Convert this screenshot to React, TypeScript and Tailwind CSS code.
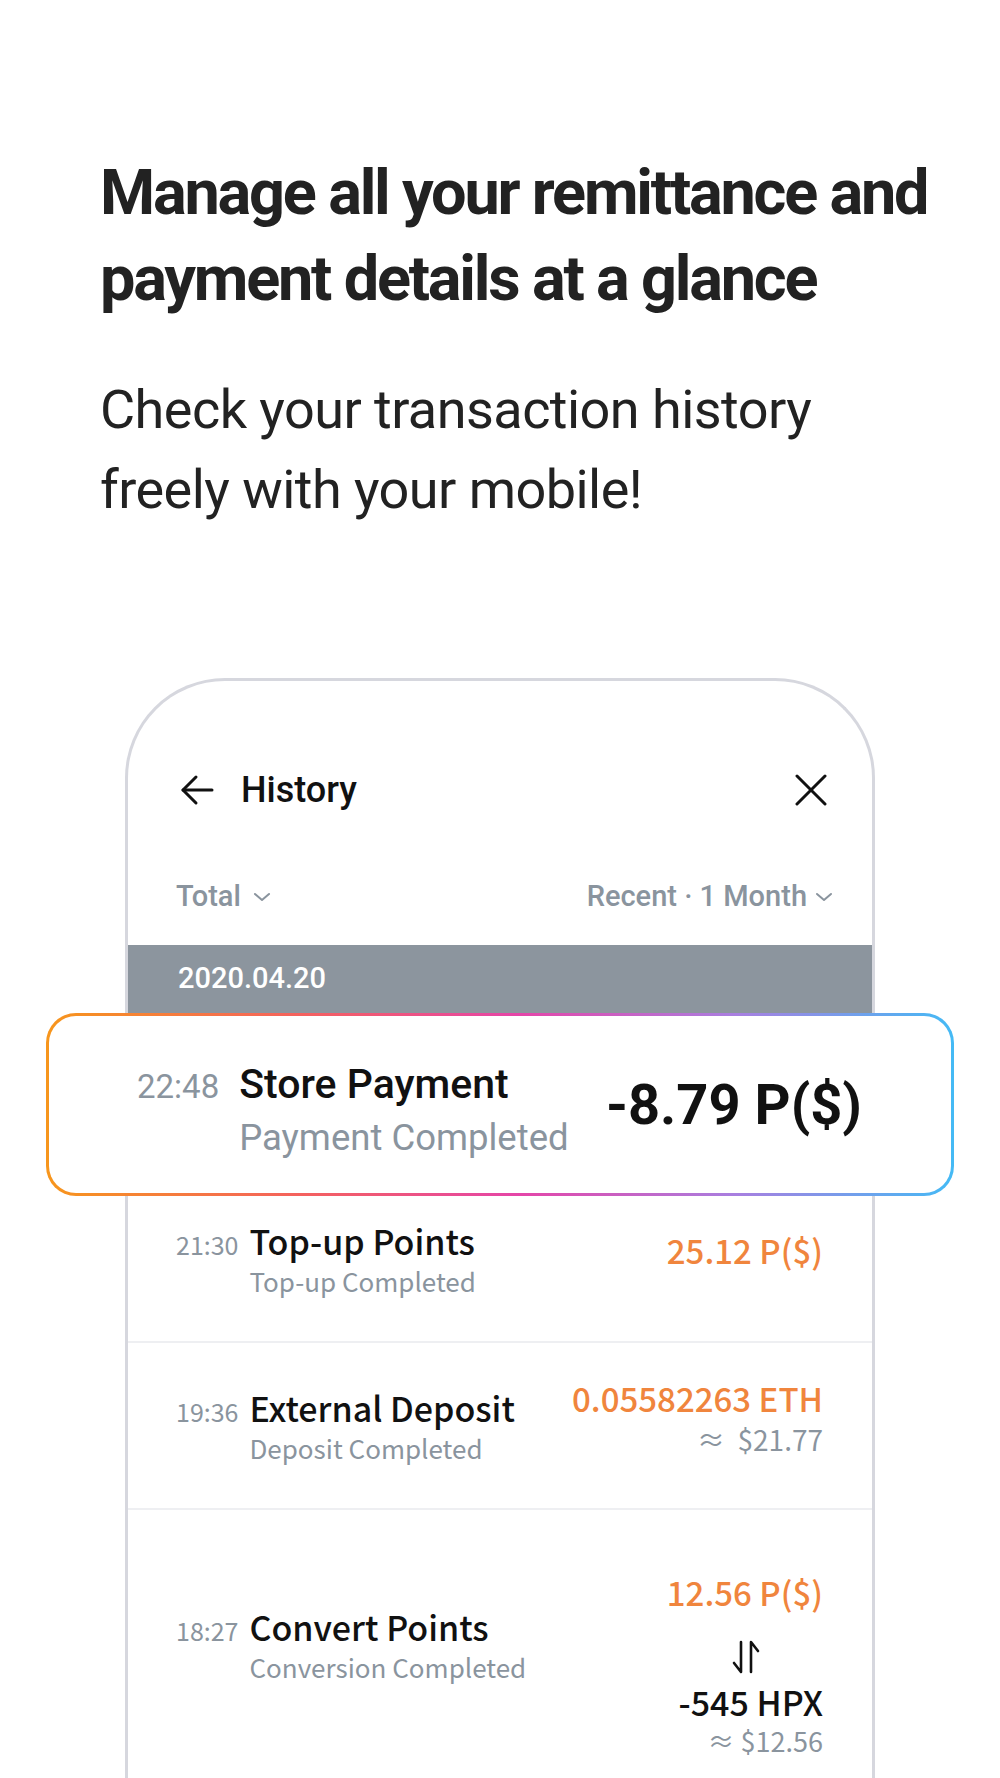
import React from 'react';

const roboto = { fontFamily: 'Roboto, "Noto Sans", sans-serif' };
const noto = { fontFamily: '"Noto Sans CJK KR", "Noto Sans", sans-serif' };

function BackArrow() {
  return (
    <svg width="34" height="32" viewBox="0 0 34 32" fill="none" stroke="#111" strokeWidth="3" strokeLinecap="round" strokeLinejoin="round">
      <path d="M32 16H3" />
      <path d="M16 3L3 16l13 13" />
    </svg>
  );
}

function CloseIcon() {
  return (
    <svg width="32" height="32" viewBox="0 0 32 32" fill="none" stroke="#111" strokeWidth="3" strokeLinecap="round">
      <path d="M2 2l28 28" />
      <path d="M30 2L2 30" />
    </svg>
  );
}

function Chevron() {
  return (
    <svg width="18" height="10" viewBox="0 0 18 10" fill="none" stroke="#8a949e" strokeWidth="2" strokeLinecap="round" strokeLinejoin="round">
      <path d="M2 2l7 6 7-6" />
    </svg>
  );
}

function SwapArrows() {
  return (
    <svg width="28" height="34" viewBox="0 0 28 34" fill="none" stroke="#111" strokeWidth="2.6" strokeLinecap="round" strokeLinejoin="round">
      <path d="M9 2v30L2 23" />
      <path d="M19 32V2l7 9" />
    </svg>
  );
}

interface Tx {
  time: string;
  title: string;
  status: string;
}

function TxLeft({ time, title, status }: Tx) {
  return (
    <div className="flex items-baseline gap-[11px]" style={noto}>
      <span className="text-[25px] text-[#8a949e]">{time}</span>
      <div className="flex flex-col">
        <span className="text-[34px] leading-[44px] font-medium text-[#111]">{title}</span>
        <span className="text-[26px] leading-[36px] text-[#8a949e]">{status}</span>
      </div>
    </div>
  );
}

export default function App() {
  return (
    <div className="w-full h-[1778px] overflow-hidden bg-white">
      <div className="pl-[100px] pt-[150px]" style={roboto}>
        <h1 className="text-[63px] font-bold leading-[86px] tracking-[-0.035em] text-[#222]">
          Manage all your remittance and
          <br />
          payment details at a glance
        </h1>
        <p className="mt-[48px] text-[54px] leading-[80px] tracking-[-0.01em] text-[#222]">
          Check your transaction history
          <br />
          freely with your mobile!
        </p>
      </div>

      <div className="ml-[125px] mt-[148px] w-[750px] h-[1200px] rounded-t-[100px] border-[3px] border-b-0 border-[#d6d7de]">
        {/* header */}
        <div className="flex items-center justify-between pl-[52px] pr-[45px] pt-[79px] h-[139px]" style={roboto}>
          <div className="flex items-center gap-[27px]">
            <BackArrow />
            <span className="text-[36px] font-medium text-[#111]">History</span>
          </div>
          <CloseIcon />
        </div>

        {/* filters */}
        <div className="mt-[57px] flex items-center justify-between pl-[48px] pr-[39px] h-[40px] text-[29px] font-medium text-[#8a949e]" style={roboto}>
          <div className="flex items-center gap-[12px]">
            <span>Total</span>
            <Chevron />
          </div>
          <div className="flex items-center gap-[8px]">
            <span>Recent · 1 Month</span>
            <Chevron />
          </div>
        </div>

        {/* date bar */}
        <div className="mt-[28px] h-[68px] bg-[#8c959e] flex items-center pl-[50px] text-[29px] font-medium text-white" style={roboto}>
          2020.04.20
        </div>

        {/* highlighted row */}
        <div className="relative h-[163px]">
          <div className="absolute top-0 left-[-82px] z-10 w-[908px] h-[183px] rounded-[30px] p-[3px] bg-[linear-gradient(90deg,#f7961c_0%,#f4615e_28%,#e545a8_52%,#a87fe0_76%,#44baf5_100%)]">
            <div className="w-full h-full rounded-[27px] bg-white flex items-center justify-between pl-[88px] pr-[89px]" style={roboto}>
              <div className="flex items-baseline gap-[20px] pt-[12px]">
                <span className="text-[33px] text-[#8a949e]">22:48</span>
                <div className="flex flex-col">
                  <span className="text-[41px] leading-[54px] font-medium text-[#111]">Store Payment</span>
                  <span className="text-[36.5px] leading-[54px] text-[#8a949e]">Payment Completed</span>
                </div>
              </div>
              <span className="text-[56px] font-bold text-[#111]">-8.79 P($)</span>
            </div>
          </div>
        </div>

        {/* rows */}
        <div className="h-[167px] border-b-2 border-[#eeeff2] flex items-center justify-between pl-[48px] pr-[49px]">
          <TxLeft time="21:30" title="Top-up Points" status="Top-up Completed" />
          <span className="text-[33px] leading-[44px] font-medium text-[#f0853d] -mt-[18px]" style={noto}>25.12 P($)</span>
        </div>

        <div className="h-[167px] border-b-2 border-[#eeeff2] flex items-center justify-between pl-[48px] pr-[49px]">
          <TxLeft time="19:36" title="External Deposit" status="Deposit Completed" />
          <div className="flex flex-col items-end -mt-[18px]" style={noto}>
            <span className="text-[33px] leading-[44px] font-medium text-[#f0853d]">0.05582263 ETH</span>
            <span className="text-[28px] leading-[38px] text-[#8a949e]">≈&nbsp;&nbsp;$21.77</span>
          </div>
        </div>

        <div className="h-[310px] flex items-center justify-between pl-[48px] pr-[49px]">
          <div className="mb-[40px]">
            <TxLeft time="18:27" title="Convert Points" status="Conversion Completed" />
          </div>
          <div className="flex flex-col items-end" style={noto}>
            <span className="text-[33px] leading-[44px] font-medium text-[#f0853d]">12.56 P($)</span>
            <div className="mt-[26px] mr-[63px]">
              <SwapArrows />
            </div>
            <span className="mt-[8px] text-[34px] leading-[40px] font-medium text-[#111]">-545 HPX</span>
            <span className="text-[27px] leading-[38px] text-[#8a949e]">≈ $12.56</span>
          </div>
        </div>
      </div>
    </div>
  );
}
